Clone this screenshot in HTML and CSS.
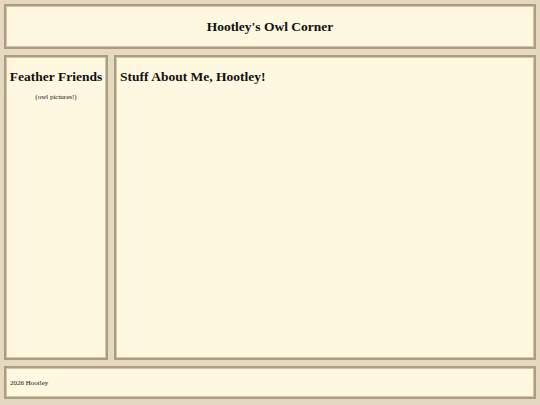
FILE: index.html
```html
<!DOCTYPE html>
<html>
<head>
<meta charset="utf-8">
<title>Hootley's Owl Corner</title>
<link rel="stylesheet" href="styles.css">
</head>
<body>
<div class="page">
  <header class="box header"><h1 class="site-title">Hootley's Owl Corner</h1></header>
  <aside class="box sidebar">
    <h2 class="side-title">Feather Friends</h2>
    <p class="side-note">(owl pictures!)</p>
  </aside>
  <main class="box main">
    <h2 class="main-title">Stuff About Me, Hootley!</h2>
  </main>
  <footer class="box footer"><p class="foot-text">2026 Hootley</p></footer>
</div>
</body>
</html>
```

FILE: styles.css
```css
html, body {
  margin: 0;
  padding: 0;
  background: #e6d9c1;
  font-family: "Liberation Serif", "Times New Roman", serif;
  color: #111;
}
.page {
  box-sizing: border-box;
  height: 405px;
  padding: 4px 4px 6px 4px;
  display: grid;
  grid-template-columns: 104px 1fr;
  grid-template-rows: 45px 1fr 33px;
  gap: 6px;
}
.box {
  box-sizing: border-box;
  background: #fff8e0;
  border: 2px solid #ad9c80;
  box-shadow: inset 0 0 0 1px #d3c5aa;
}
.header {
  grid-column: 1 / 3;
  display: flex;
  align-items: center;
  justify-content: center;
}
.site-title {
  margin: 0;
  font-size: 13.5px;
  font-weight: bold;
}
.sidebar {
  text-align: center;
  padding: 12px 3px;
}
.side-title {
  margin: 0;
  font-size: 13.5px;
  font-weight: bold;
}
.side-note {
  margin: 8px 0 0;
  font-size: 7px;
}
.main {
  padding: 12px 4px;
}
.main-title {
  margin: 0;
  font-size: 13.5px;
  font-weight: bold;
}
.footer {
  grid-column: 1 / 3;
  display: flex;
  align-items: center;
  padding: 0 4px;
}
.foot-text {
  margin: 0;
  font-size: 7px;
}
```
